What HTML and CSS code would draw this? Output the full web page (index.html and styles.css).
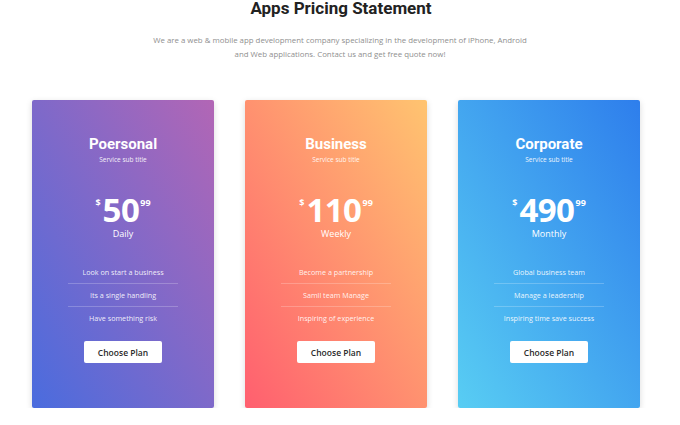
FILE: index.html
```html
<!DOCTYPE html>
<html>
<head>
<meta charset="utf-8">
<link rel="stylesheet" href="styles.css">
</head>
<body>
<section class="pricing">
  <h1 class="heading">Apps Pricing Statement</h1>
  <p class="intro">We are a web &amp; mobile app development company specializing in the development of iPhone, Android and Web applications. Contact us and get free quote now!</p>
  <div class="cards">
    <div class="card card-purple">
      <h2 class="card-title">Poersonal</h2>
      <div class="card-sub">Service sub title</div>
      <div class="price"><span class="cur">$</span><span class="amount">50</span><span class="cents">99</span></div>
      <div class="period">Daily</div>
      <ul class="features">
        <li>Look on start a business</li>
        <li>Its a single handling</li>
        <li>Have something risk</li>
      </ul>
      <button class="btn">Choose Plan</button>
    </div>
    <div class="card card-orange">
      <h2 class="card-title">Business</h2>
      <div class="card-sub">Service sub title</div>
      <div class="price"><span class="cur">$</span><span class="amount">110</span><span class="cents">99</span></div>
      <div class="period">Weekly</div>
      <ul class="features">
        <li>Become a partnership</li>
        <li>Samll team Manage</li>
        <li>Inspiring of experience</li>
      </ul>
      <button class="btn">Choose Plan</button>
    </div>
    <div class="card card-blue">
      <h2 class="card-title">Corporate</h2>
      <div class="card-sub">Service sub title</div>
      <div class="price"><span class="cur">$</span><span class="amount">490</span><span class="cents">99</span></div>
      <div class="period">Monthly</div>
      <ul class="features">
        <li>Global business team</li>
        <li>Manage a leadership</li>
        <li>Inspiring time save success</li>
      </ul>
      <button class="btn">Choose Plan</button>
    </div>
  </div>
</section>
</body>
</html>
```
FILE: styles.css
```css
* { box-sizing: border-box; }
html, body { margin: 0; padding: 0; background: #fff; }
body { font-family: "Open Sans", "Liberation Sans", sans-serif; }

.pricing { display: flex; flex-direction: column; align-items: center; }

.heading {
  margin: 0;
  font-family: Roboto, "Liberation Sans", sans-serif;
  font-weight: 700;
  font-size: 17px;
  line-height: 16px;
  color: #222;
  text-align: center;
  padding-left: 2px;
}

.intro {
  margin: 17px 0 0;
  width: 380px;
  font-size: 7.85px;
  line-height: 14px;
  color: #8f8f8f;
  text-align: center;
}

.cards {
  align-self: flex-start;
  margin: 39px 0 0 32px;
  display: flex;
  gap: 31px;
}

.card {
  width: 182px;
  height: 308px;
  border-radius: 2px;
  padding-top: 35px;
  display: flex;
  flex-direction: column;
  align-items: center;
  color: #fff;
  box-shadow: 0 2px 6px rgba(0, 0, 0, 0.15);
}
.card-purple { background: linear-gradient(to top right, #4a6cde, #b266b5); }
.card-orange { background: linear-gradient(to top right, #ff5f6f, #ffc470); }
.card-blue { background: linear-gradient(to top right, #58cdf3, #2e7eec); }

.card-title {
  margin: 0;
  font-family: Roboto, "Liberation Sans", sans-serif;
  font-weight: 700;
  font-size: 15px;
  line-height: 18px;
}
.card-sub {
  margin-top: 2px;
  font-size: 6.5px;
  line-height: 10px;
  opacity: 0.9;
}

.price {
  margin-top: 30px;
  display: flex;
  align-items: flex-start;
  line-height: 30px;
  font-weight: 700;
}
.amount { font-size: 33px; letter-spacing: -0.5px; }
.cur, .cents { font-size: 9px; line-height: 10px; margin-top: 3px; }
.cur { margin-right: 2px; }
.cents { margin-left: 1px; }

.period {
  margin-top: 3px;
  font-size: 9px;
  line-height: 12px;
}

.features {
  list-style: none;
  margin: 21px 0 0;
  padding: 0;
  width: 110px;
  text-align: center;
}
.features li {
  font-size: 7.2px;
  line-height: 22px;
  color: rgba(255, 255, 255, 0.9);
  border-bottom: 1px solid rgba(255, 255, 255, 0.22);
  white-space: nowrap;
}
.features li:last-child { border-bottom: none; }

.btn {
  margin-top: 12px;
  width: 78px;
  height: 22px;
  border: none;
  border-radius: 2px;
  background: #fff;
  color: #2a2a2a;
  font-family: "Open Sans", "Liberation Sans", sans-serif;
  font-weight: 600;
  font-size: 8.5px;
  padding: 0;
}
```
